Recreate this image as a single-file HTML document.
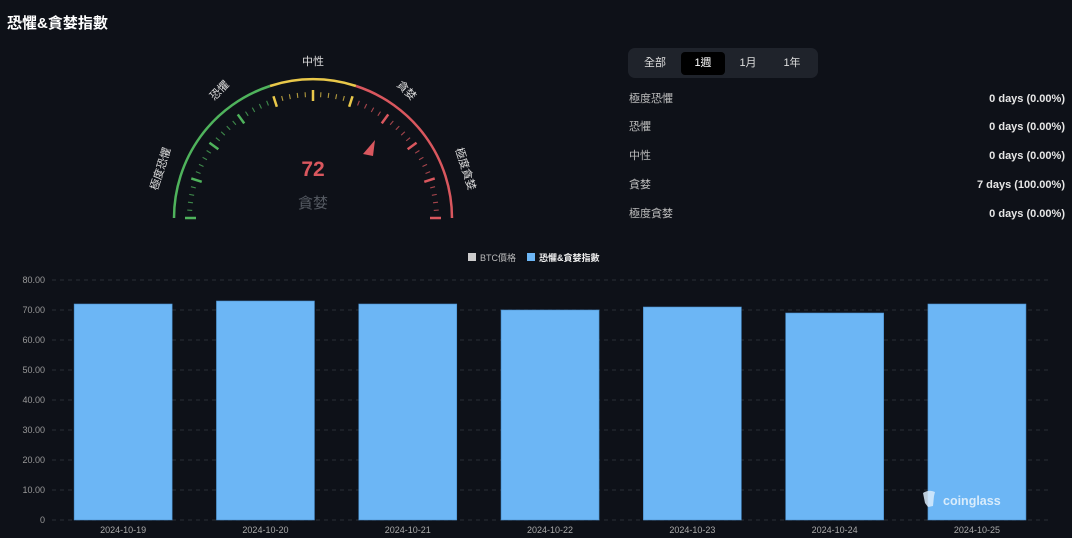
<!DOCTYPE html>
<html><head><meta charset="utf-8">
<style>
*{margin:0;padding:0;box-sizing:border-box}
body{width:1072px;height:538px;background:#0e1118;font-family:"Liberation Sans","Noto Sans CJK TC",sans-serif;color:#ddd;position:relative;overflow:hidden}
.t{position:absolute;left:7px;top:12px;font-size:15px;font-weight:bold;color:#fff}
.tabs{position:absolute;left:628px;top:48px;width:190px;height:30px;background:#1f232b;border-radius:7px}
.tabs span{position:absolute;top:4px;height:23px;line-height:23px;font-size:11px;color:#ddd;text-align:center;width:44px}
.tabs .on{background:#000;border-radius:4px;color:#fff}
.row{position:absolute;left:629px;width:436px;font-size:11px;line-height:14px;color:#bbb}
.row b{position:absolute;right:0;top:0;color:#e6e6e6;font-weight:bold;font-size:11px;line-height:14px}
svg text{font-family:"Liberation Sans","Noto Sans CJK TC",sans-serif}
</style></head><body>
<div class="t">恐懼&amp;貪婪指數</div>
<svg id="g" width="1072" height="538" style="position:absolute;left:0;top:0">
<path d="M174 218 A139 139 0 0 1 270 86" stroke="#4fb35c" stroke-width="2.5" fill="none"/>
<path d="M270 86 A139 139 0 0 1 356 86" stroke="#e9c84a" stroke-width="2.5" fill="none"/>
<path d="M356 86 A139 139 0 0 1 452 218" stroke="#d9575e" stroke-width="2.5" fill="none"/>
<g id="ticks"></g>
<polygon points="375,140 363,154 373,156" fill="#d9575e"/>
<text x="313" y="176" text-anchor="middle" font-size="21" font-weight="bold" fill="#d9575e">72</text>
<text x="313" y="208" text-anchor="middle" font-size="15" fill="#555a62">貪婪</text>
<text x="313" y="65" text-anchor="middle" font-size="11" fill="#ddd">中性</text>
<text transform="translate(222,93) rotate(-45)" text-anchor="middle" font-size="11" fill="#ddd">恐懼</text>
<text transform="translate(404,93) rotate(45)" text-anchor="middle" font-size="11" fill="#ddd">貪婪</text>
<text transform="translate(164,170) rotate(-72)" text-anchor="middle" font-size="11" fill="#ddd">極度恐懼</text>
<text transform="translate(462,170) rotate(72)" text-anchor="middle" font-size="11" fill="#ddd">極度貪婪</text>
<rect x="468" y="253" width="8" height="8" fill="#ccc"/>
<text x="480" y="261" font-size="9" fill="#bbb">BTC價格</text>
<rect x="527" y="253" width="8" height="8" fill="#6cb6f5"/>
<text x="539" y="261" font-size="9" fill="#eee" font-weight="bold">恐懼&amp;貪婪指數</text>
<g id="grid" stroke="#2a2e36" stroke-dasharray="4 4"></g>
<g id="ylab" font-size="9" fill="#999" text-anchor="end"></g>
<g id="bars"></g>
<g id="logo">
<text x="943" y="505" font-size="12.5" font-weight="bold" fill="#d9ecfb">coinglass</text>
<path d="M923 493 q6 -4 12 -1 l-1 4 l-1 10 l-5 1 l-3 -4z" fill="#d9ecfb" opacity=".85"/>
</g>
</svg>
<div class="tabs"><span style="left:5px">全部</span><span class="on" style="left:53px">1週</span><span style="left:98px">1月</span><span style="left:142px">1年</span></div>
<div class="row" style="top:92px">極度恐懼<b>0 days (0.00%)</b></div>
<div class="row" style="top:120px">恐懼<b>0 days (0.00%)</b></div>
<div class="row" style="top:149px">中性<b>0 days (0.00%)</b></div>
<div class="row" style="top:178px">貪婪<b>7 days (100.00%)</b></div>
<div class="row" style="top:207px">極度貪婪<b>0 days (0.00%)</b></div>
<script>
var ns="http://www.w3.org/2000/svg";
function el(p,n,a){var e=document.createElementNS(ns,n);for(var k in a)e.setAttribute(k,a[k]);p.appendChild(e);return e;}
var cx=313,cy=218,t=document.getElementById('ticks');
for(var i=0;i<=50;i++){var f=i/50,a=Math.PI*(1-f),maj=i%5==0;
var c=f<0.4?'#4fb35c':(f<=0.6?'#e9c84a':'#d9575e');
var r1=maj?117:121,r2=maj?128:126;
el(t,'line',{x1:cx+r1*Math.cos(a),y1:cy-r1*Math.sin(a),x2:cx+r2*Math.cos(a),y2:cy-r2*Math.sin(a),stroke:c,'stroke-width':maj?2.5:1.1,opacity:maj?1:0.75});}
var g=document.getElementById('grid'),yl=document.getElementById('ylab');
for(var v=0;v<=80;v+=10){var y=520-v*3;el(g,'line',{x1:52,y1:y,x2:1048,y2:y});
var tx=el(yl,'text',{x:45,y:y+3});tx.textContent=v==0?'0':v.toFixed(2);}
var vals=[72,73,72,70,71,69,72],d=['2024-10-19','2024-10-20','2024-10-21','2024-10-22','2024-10-23','2024-10-24','2024-10-25'],b=document.getElementById('bars');
for(var i=0;i<7;i++){var c=52+142.3*(i+0.5);
el(b,'rect',{x:c-49,y:520-vals[i]*3,width:98,height:vals[i]*3,fill:'#6cb6f5',stroke:'#4a8fcc','stroke-width':0.6});
var tx=el(b,'text',{x:c,y:533,'font-size':9,fill:'#aaa','text-anchor':'middle'});tx.textContent=d[i];}
document.getElementById('g').appendChild(document.getElementById('logo'));
</script>
</body></html>
